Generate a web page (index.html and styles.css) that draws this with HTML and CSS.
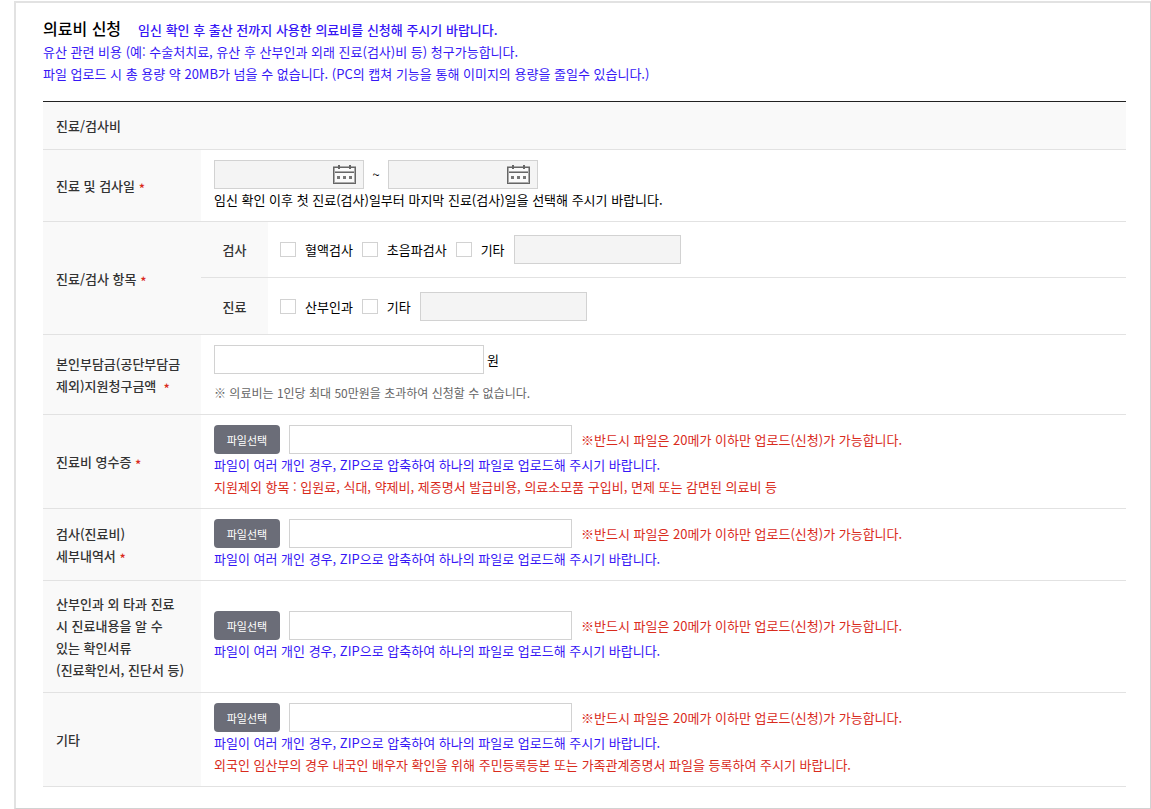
FILE: index.html
```html
<!DOCTYPE html>
<html lang="ko">
<head>
  <meta charset="UTF-8">
  <meta name="viewport" content="width=device-width, initial-scale=1.0">
  <title>의료비 신청</title>
  <link rel="stylesheet" href="styles.css">
</head>
<body>
  <svg class="sprite" aria-hidden="true">
    <symbol id="calendar" viewBox="0 0 23 19">
      <path d="M1 3h21v15H1z" fill="#fafafa"/>
      <path d="M0 1h23v1H0z" fill="#aaa"/>
      <path d="M0 2h23v1H0zM0 3h1v16H0zM22 3h1v16h-1zM1 18h21v1H1zM1 7h21v1H1z" fill="#666"/>
      <path d="M1 3h1v15H1zM21 3h1v15h-1zM2 17h19v1H2zM2 6h19v1H2z" fill="#aaa"/>
      <path d="M5 0h2v4H5zM16 0h2v4h-2z" fill="#666"/>
      <path d="M4 11h3v3H4zM10 11h3v3h-3zM16 11h3v3h-3z" fill="#777"/>
    </symbol>
  </svg>

  <form class="apply-box">
    <div class="title-line">
      <h1>의료비 신청</h1>
      <strong class="blue">임신 확인 후 출산 전까지 사용한 의료비를 신청해 주시기 바랍니다.</strong>
    </div>
    <p class="blue">유산 관련 비용 (예: 수술처치료, 유산 후 산부인과 외래 진료(검사)비 등) 청구가능합니다.</p>
    <p class="blue">파일 업로드 시 총 용량 약 20MB가 넘을 수 없습니다. (PC의 캡쳐 기능을 통해 이미지의 용량을 줄일수 있습니다.)</p>

    <table class="form-table">
      <colgroup>
        <col class="col-title">
        <col class="col-sub">
        <col>
      </colgroup>
      <tbody>
        <tr>
          <th colspan="3" class="section">진료/검사비</th>
        </tr>
        <tr>
          <th scope="row">진료 및 검사일 <span class="required">*</span></th>
          <td colspan="2">
            <div class="field">
              <span class="date-box">
                <input type="text" id="start-date" aria-label="진료 시작일" readonly>
                <button type="button" class="cal-btn" aria-label="시작일 선택"><svg><use href="#calendar"/></svg></button>
              </span>
              <span class="tilde">~</span>
              <span class="date-box">
                <input type="text" id="end-date" aria-label="진료 종료일" readonly>
                <button type="button" class="cal-btn" aria-label="종료일 선택"><svg><use href="#calendar"/></svg></button>
              </span>
            </div>
            <p>임신 확인 이후 첫 진료(검사)일부터 마지막 진료(검사)일을 선택해 주시기 바랍니다.</p>
          </td>
        </tr>
        <!-- 진료/검사 항목 -->
        <tr>
          <th scope="rowgroup" rowspan="2">진료/검사 항목 <span class="required">*</span></th>
          <th scope="row" class="sub">검사</th>
          <td class="check-cell">
            <div class="field checks">
              <label><input type="checkbox">혈액검사</label>
              <label><input type="checkbox">초음파검사</label>
              <label><input type="checkbox">기타</label>
              <input type="text" class="etc" aria-label="검사 기타" disabled>
            </div>
          </td>
        </tr>
        <tr>
          <th scope="row" class="sub">진료</th>
          <td class="check-cell check-last">
            <div class="field checks">
              <label><input type="checkbox">산부인과</label>
              <label><input type="checkbox">기타</label>
              <input type="text" class="etc" aria-label="진료 기타" disabled>
            </div>
          </td>
        </tr>
        <tr>
          <th scope="row"><label for="amount">본인부담금(공단부담금<br>제외)지원청구금액 &nbsp;<span class="required">*</span></label></th>
          <td colspan="2">
            <div class="field amount">
              <input type="text" id="amount">
              <span>원</span>
            </div>
            <p class="note">※ 의료비는 1인당 최대 50만원을 초과하여 신청할 수 없습니다.</p>
          </td>
        </tr>
        <!-- 첨부파일 -->
        <tr>
          <th scope="row"><label for="file1">진료비 영수증 <span class="required">*</span></label></th>
          <td colspan="2">
            <div class="field file">
              <button type="button" class="file-btn">파일선택</button>
              <input type="text" id="file1">
              <span class="red">※반드시 파일은 20메가 이하만 업로드(신청)가 가능합니다.</span>
            </div>
            <p class="blue">파일이 여러 개인 경우, ZIP으로 압축하여 하나의 파일로 업로드해 주시기 바랍니다.</p>
            <p class="red">지원제외 항목 : 입원료, 식대, 약제비, 제증명서 발급비용, 의료소모품 구입비, 면제 또는 감면된 의료비 등</p>
          </td>
        </tr>
        <tr>
          <th scope="row"><label for="file2">검사(진료비)<br>세부내역서 <span class="required">*</span></label></th>
          <td colspan="2">
            <div class="field file">
              <button type="button" class="file-btn">파일선택</button>
              <input type="text" id="file2">
              <span class="red">※반드시 파일은 20메가 이하만 업로드(신청)가 가능합니다.</span>
            </div>
            <p class="blue">파일이 여러 개인 경우, ZIP으로 압축하여 하나의 파일로 업로드해 주시기 바랍니다.</p>
          </td>
        </tr>
        <tr>
          <th scope="row"><label for="file3">산부인과 외 타과 진료<br>시 진료내용을 알 수<br>있는 확인서류<br>(진료확인서, 진단서 등)</label></th>
          <td colspan="2">
            <div class="field file">
              <button type="button" class="file-btn">파일선택</button>
              <input type="text" id="file3">
              <span class="red">※반드시 파일은 20메가 이하만 업로드(신청)가 가능합니다.</span>
            </div>
            <p class="blue">파일이 여러 개인 경우, ZIP으로 압축하여 하나의 파일로 업로드해 주시기 바랍니다.</p>
          </td>
        </tr>
        <tr>
          <th scope="row"><label for="file4">기타</label></th>
          <td colspan="2">
            <div class="field file">
              <button type="button" class="file-btn">파일선택</button>
              <input type="text" id="file4">
              <span class="red">※반드시 파일은 20메가 이하만 업로드(신청)가 가능합니다.</span>
            </div>
            <p class="blue">파일이 여러 개인 경우, ZIP으로 압축하여 하나의 파일로 업로드해 주시기 바랍니다.</p>
            <p class="red">외국인 임산부의 경우 내국인 배우자 확인을 위해 주민등록등본 또는 가족관계증명서 파일을 등록하여 주시기 바랍니다.</p>
          </td>
        </tr>
      </tbody>
    </table>
  </form>
</body>
</html>
```

FILE: styles.css
```css
* {
  box-sizing: border-box;
}

body {
  margin: 1px 0 0 14px;
  background: #fff;
  color: #000;
  font-family: "Noto Sans CJK KR", "Noto Sans KR", sans-serif;
  font-size: 13px;
  line-height: 22px;
}

h1,
p {
  margin: 0;
}

.sprite {
  display: none;
}

.apply-box {
  padding: 14px 24px 21px 27px;
  border: 1px solid #d2d2d2;
  border-top: 2px solid #e2e2e2;
  border-left: 2px solid #e2e2e2;
}

.title-line {
  display: flex;
  align-items: baseline;
  gap: 17px;
}

h1 {
  font-size: 16px;
  font-weight: 500;
}

strong {
  font-weight: 500;
}

.blue {
  color: #3617f5;
}

.red,
.required {
  color: #d92b1c;
}

.required {
  line-height: 1;
  vertical-align: -3px;
}

.form-table {
  width: 100%;
  margin-top: 16px;
  border-top: 1px solid #222;
  border-spacing: 0;
  table-layout: fixed;
}

.col-title {
  width: 158px;
}

.col-sub {
  width: 67px;
}

th,
td {
  border-bottom: 1px solid #e2e2e2;
  vertical-align: middle;
}

th {
  padding: 12px 0 11px 13px;
  background: #f9f9f9;
  color: #333;
  font-weight: 500;
  text-align: left;
}

th.section {
  padding: 13px 13px 12px;
}

th.sub {
  padding: 12px 0 11px;
  text-align: center;
}

td {
  padding: 10px 13px;
}

td.check-cell {
  padding: 13px 12px;
}

td.check-last {
  padding-top: 14px;
}

.field {
  display: flex;
  align-items: center;
}

input[type="text"] {
  height: 29px;
  padding: 0 8px;
  border: 1px solid #d2d2d2;
  border-radius: 0;
  background: #fff;
  font: inherit;
}

input[type="text"]:read-only {
  background: #f4f4f4;
}

.date-box {
  display: flex;
  width: 150px;
  height: 29px;
  border: 1px solid #d2d2d2;
  background: #f4f4f4;
}

.date-box input[type="text"] {
  flex: 1;
  min-width: 0;
  height: 27px;
  border: 0;
}

.cal-btn {
  display: flex;
  align-items: center;
  padding: 0 7px 0 0;
  border: 0;
  background: none;
  cursor: pointer;
}

.cal-btn svg {
  width: 23px;
  height: 19px;
}

.tilde {
  width: 24px;
  text-align: center;
}

.checks {
  gap: 9px;
}

.checks label {
  display: flex;
  align-items: center;
  gap: 9px;
}

input[type="checkbox"] {
  appearance: none;
  width: 16px;
  height: 15px;
  margin: 0;
  border: 1px solid #d2d2d2;
  background: #fff;
}

input[type="checkbox"]:checked {
  background: #6b6d78;
}

.etc {
  width: 167px;
}

.amount {
  gap: 3px;
}

.amount input {
  width: 270px;
}

.note {
  margin-top: 8px;
  color: #666;
  font-size: 12px;
}

.file {
  gap: 9px;
}

.file input {
  width: 283px;
}

.file-btn {
  width: 66px;
  height: 29px;
  padding: 0;
  border: 0;
  border-radius: 4px;
  background: #6b6d78;
  color: #fff;
  font-family: inherit;
  font-size: 11px;
  cursor: pointer;
}
```
